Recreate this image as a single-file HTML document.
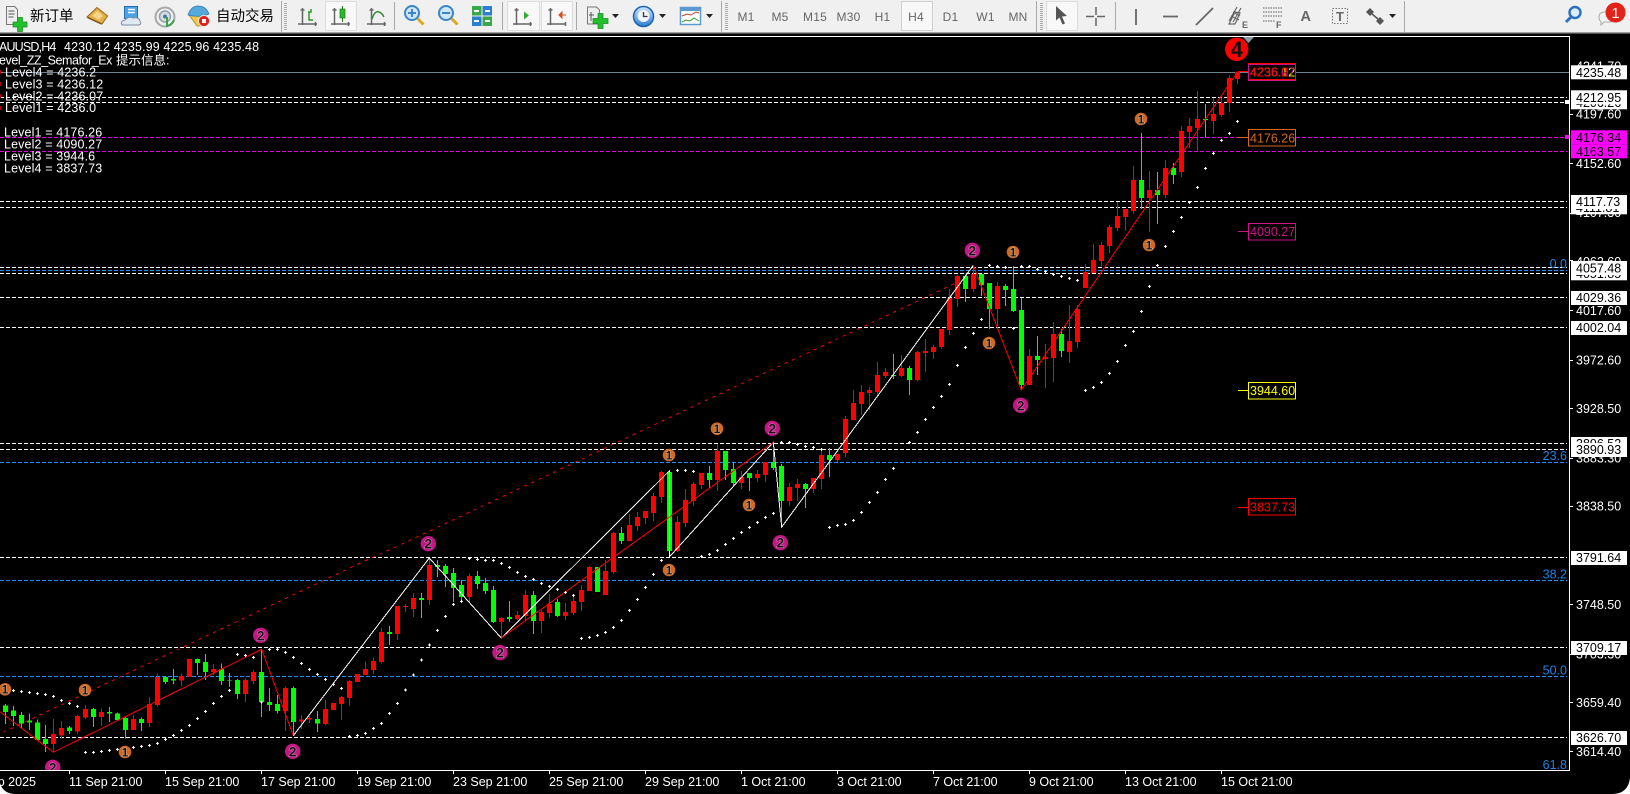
<!DOCTYPE html>
<html><head><meta charset="utf-8"><title>XAUUSD,H4</title>
<style>
html,body{margin:0;padding:0;background:#000;width:1630px;height:794px;overflow:hidden}
svg{display:block;position:absolute;left:0;top:0}
text{font-family:"Liberation Sans","Noto Sans CJK SC",sans-serif;white-space:pre}
.c path{fill:none;shape-rendering:crispEdges}
.rw{stroke:#f00;stroke-width:3}.rb{stroke:#f00;stroke-width:15}
.gw{stroke:#0f0;stroke-width:3}.gb{stroke:#0f0;stroke-width:15}
.dots{fill:none;stroke:none;marker-start:url(#mk);marker-mid:url(#mk);marker-end:url(#mk)}
.l{font-size:12.5px;fill:#fff}
.t{font-size:12.5px;fill:#000}
.tf{font-size:12.5px;fill:#1e82e6;text-anchor:end}
.info{font-size:12.5px;fill:#fff;letter-spacing:.13px}
.tb{font-size:12px;fill:#666;text-anchor:middle;letter-spacing:.2px}
.cn{font-size:14.5px;fill:#000;font-family:"Liberation Sans","Noto Sans CJK SC",sans-serif}
.n{font-size:12px;font-weight:bold;fill:#111;text-anchor:middle;stroke:rgba(255,255,255,.55);stroke-width:.9px;paint-order:stroke}
.n2{font-size:14px;font-weight:bold;fill:#111;text-anchor:middle;stroke:rgba(255,255,255,.55);stroke-width:.9px;paint-order:stroke}
.ax{fill:none;stroke:#666;stroke-width:1.5}
.z{shape-rendering:crispEdges;fill:none}
</style></head><body>
<svg width="1630" height="794" viewBox="0 0 1630 794" xmlns="http://www.w3.org/2000/svg">
<defs>
<clipPath id="ch"><rect x="0" y="37" width="1569" height="733"/></clipPath>
<marker id="mk" markerUnits="userSpaceOnUse" viewBox="0 0 9 9" refX="4.5" refY="4.5" markerWidth="9" markerHeight="9"><path d="M3 0h3v3h3v3h-3v3h-3v-3h-3v-3h3z" fill="#fff"/></marker>
<linearGradient id="gb" x1="0" y1="0" x2="0" y2="1"><stop offset="0" stop-color="#cfe8fb"/><stop offset="1" stop-color="#2a7fd0"/></linearGradient>
</defs>
<rect width="1630" height="794" fill="#000"/>
<!-- toolbar -->
<rect width="1630" height="32" fill="#f0f0f0"/>
<rect y="32" width="1630" height="1.5" fill="#a0a0a0"/>
<!-- new order -->
<path d="M6.5 6.5h8l3 3v15h-11z" fill="#eee" stroke="#777"/>
<path d="M8.5 11h6M8.5 14h6M8.5 17h5" stroke="#888" stroke-width="1.5"/>
<path d="M17.5 17.5h5v4.5h4.5v5h-4.500v4.500h-5v-4.500h-4.500v-5h4.500z" fill="#22c02c" stroke="#198a20" stroke-width=".7"/>
<text class="cn" x="30" y="21">新订单</text>
<!-- book -->
<path d="M97 7.500L87 17L102 24L107.500 16Z" fill="#e6b048" stroke="#94641c"/><path d="M87.500 17.500L101.500 24" stroke="#7a5010" stroke-width="1.500"/><path d="M92 16L97.500 11L103 16L99 19.500Z" fill="#f4d68a"/>
<!-- cloud doc -->
<path d="M124.500 6.500h13v12h-13z" fill="#4ba3e6" stroke="#1f6fb5"/><path d="M128 9.500h7M128 12.500h7" stroke="#fff" stroke-width="1.500"/>
<path d="M122 25q-2-4 3-5q3-4 8-2q6-1 7 3q2 3-1 4z" fill="#dfe9f2" stroke="#7d8fa0"/>
<!-- radio -->
<circle cx="165" cy="17" r="9.500" fill="none" stroke="#a8a8a8" stroke-width="2"/><circle cx="165" cy="16.500" r="5.500" fill="#dcdcdc" stroke="#8aa0b0" stroke-width="1.500"/><circle cx="165" cy="16.500" r="2" fill="#3f7fb0"/><path d="M167 17v9q5-1 7-6" fill="none" stroke="#3aa04a" stroke-width="2"/>
<!-- auto trading -->
<path d="M189 15l8 11h8v-11z" fill="#efc94a" stroke="#a88420" stroke-width=".7"/>
<path d="M188 15q3-9 10-9q8 0 11 8q-10 4-21 1z" fill="#55a8dc" stroke="#2d78b0" stroke-width=".7"/>
<circle cx="204" cy="21" r="5.500" fill="#e02020" stroke="#fff" stroke-width=".7"/><rect x="202" y="19" width="4" height="4" fill="#fff"/>
<text class="cn" x="216" y="21">自动交易</text>
<!-- separators -->
<path d="M281.500 1v31M394.500 2v28M502.500 2v28M576.500 2v28M721.500 1v31M1036.500 1v31M1115.500 2v28M1404.500 1v31" stroke="#a8a8a8" fill="none"/>
<path d="M285.500 3v27M726.500 3v27M1041.500 3v27" stroke="#aaa" stroke-width="3" stroke-dasharray="1 1" fill="none"/>
<!-- selected buttons -->
<rect x="325.500" y="1.500" width="31" height="29" fill="#f8f8f8" stroke="#dcdcdc"/>
<rect x="507.500" y="1.500" width="32" height="29" fill="#f8f8f8" stroke="#dcdcdc"/>
<rect x="541.500" y="1.500" width="31" height="29" fill="#f8f8f8" stroke="#dcdcdc"/>
<rect x="901.500" y="1.500" width="31" height="29" fill="#f8f8f8" stroke="#d0d0d0"/>
<rect x="1046.500" y="1.500" width="31" height="29" fill="#f8f8f8" stroke="#dcdcdc"/>
<!-- chart type icons -->
<path class="ax" d="M302.500 8v17M298 24h19M334.500 8v17M331 24h19M371.500 8v17M367 24h19M516.500 8v17M513 24h19M550.500 8v17M547 24h19M300.500 10h4M332.500 10h4M369.500 10h4M514.500 10h4M548.500 10h4M315.500 22v4M348.500 22v4M384.500 22v4M530.500 22v4M565.500 22v4"/>
<path d="M308 12h3v-3M309 12v8h4" fill="none" stroke="#2a9a2a" stroke-width="1.500"/>
<path d="M342.500 6v16" stroke="#1a7a1a"/><rect x="340" y="9" width="5" height="9" fill="#2ab82a" stroke="#1a7a1a" stroke-width=".7"/>
<path d="M372 19q3-9 7-7q3 1 5 5" fill="none" stroke="#3a8a3a" stroke-width="1.500"/>
<path d="M524 11.500l5 4l-5 4z" fill="#30b030"/>
<path d="M566 15l-4 0M562 12l-3 3l3 3z" stroke="#d05020" fill="#d05020"/>
<!-- zoom -->
<circle cx="412" cy="13" r="7" fill="#cfe6f8" stroke="#3a86c8" stroke-width="2"/><path d="M408 13h8M412 9v8" stroke="#3a86c8" stroke-width="2"/><path d="M417.500 18.500l6 6" stroke="#d8a820" stroke-width="3"/>
<circle cx="446" cy="13" r="7" fill="#cfe6f8" stroke="#3a86c8" stroke-width="2"/><path d="M442 13h8" stroke="#3a86c8" stroke-width="2"/><path d="M451.500 18.500l6 6" stroke="#d8a820" stroke-width="3"/>
<!-- tile -->
<rect x="472" y="6" width="9.500" height="9.500" fill="#3aa84a"/><rect x="482.500" y="6" width="9.500" height="9.500" fill="#2a7fd0"/><rect x="472" y="16.500" width="9.500" height="9.500" fill="#2a7fd0"/><rect x="482.500" y="16.500" width="9.500" height="9.500" fill="#3aa84a"/>
<path d="M474 11h5M485 11h5M474 21h5M485 21h5" stroke="#fff" stroke-width="2"/>
<!-- add indicator -->
<path d="M587.500 7h9l3 3v14h-12z" fill="#eee" stroke="#777"/><path d="M591 12v9M589 15h5" stroke="#555" stroke-width="1"/>
<path d="M597 15.500h5v5h5v5h-5v5h-5v-5h-5v-5h5z" fill="#22c02c" stroke="#198a20" stroke-width=".7" transform="translate(1,-2)"/>
<path d="M612 14h7l-3.500 4zM659 14h7l-3.500 4zM706 14h7l-3.500 4zM1389 14h7l-3.500 4z" fill="#222"/>
<!-- clock -->
<circle cx="643.500" cy="16.500" r="10" fill="url(#gb)" stroke="#1a62b0" stroke-width="1.500"/><circle cx="643.500" cy="16" r="6" fill="#eef4fa"/><path d="M643.500 12v4.500h4" stroke="#334" fill="none" stroke-width="1.300"/>
<!-- template -->
<rect x="680.500" y="7.500" width="20" height="17" fill="#fff" stroke="#5a9ad0" stroke-width="1.500"/><rect x="680" y="7" width="21" height="4" fill="#5a9ad0"/>
<path d="M682 16l5-2l4 1l5-3l3 1" fill="none" stroke="#c04020"/><path d="M682 22l4-2l4 1l4-3l5 3" fill="none" stroke="#30a030"/>
<!-- periods -->
<text class="tb" x="746" y="21">M1</text><text class="tb" x="780" y="21">M5</text><text class="tb" x="815" y="21">M15</text><text class="tb" x="848.500" y="21">M30</text><text class="tb" x="882.500" y="21">H1</text><text class="tb" x="916" y="21">H4</text><text class="tb" x="950.500" y="21">D1</text><text class="tb" x="985.500" y="21">W1</text><text class="tb" x="1018" y="21">MN</text>
<!-- cursor -->
<path d="M1056 6l11 10l-5 0.500l3 7l-2.500 1l-3-7l-3.500 3z" fill="#555"/>
<!-- crosshair -->
<path d="M1096 7v19M1086 16.500h19" stroke="#666" stroke-width="1.500" fill="none" stroke-dasharray="8 3 8"/>
<path d="M1136 9v16M1163 16.500h15M1196 25l17-17" stroke="#666" stroke-width="1.800" fill="none"/>
<path d="M1229 24l6-12l5 1l-5 11zM1231 16l8 4M1233 12l7 4M1241 8l-8 14M1237 7l-8 14" stroke="#666" fill="none" stroke-width="1.200"/>
<text x="1242" y="28" style="font-size:9px;font-weight:bold;fill:#666">E</text>
<path d="M1263 8h19M1263 12h19M1263 16h19M1263 21h12" stroke="#777" stroke-dasharray="1.500 1" stroke-width="1.300" fill="none"/>
<text x="1276" y="28" style="font-size:9px;font-weight:bold;fill:#666">F</text>
<text x="1300.500" y="21" style="font-size:14.500px;font-weight:bold;fill:#666">A</text>
<rect x="1332.500" y="8.500" width="15" height="15" fill="none" stroke="#777" stroke-dasharray="1.500 1.500"/>
<text x="1336" y="21" style="font-size:13px;font-weight:bold;fill:#666">T</text>
<path d="M1366 12l4-4l4 4l-4 4zM1376 21l4-4l4 4l-4 4z" fill="#555"/><path d="M1372 14l6 5" stroke="#555" stroke-width="1.500"/>
<!-- search + balloon -->
<circle cx="1575" cy="12.500" r="5.500" fill="#dcecf8" stroke="#2a70c0" stroke-width="2.400"/><path d="M1571 17l-5 5" stroke="#2a70c0" stroke-width="3"/>
<path d="M1599 17q0-5 6-5h4q6 0 6 5t-6 5h-5l-3 3v-3.500q-2-1-2-4.500z" fill="#f4f4f4" stroke="#aaa"/>
<circle cx="1615.500" cy="12.500" r="10" fill="#e2231a"/><text x="1615.500" y="18" style="font-size:15px;fill:#fff;text-anchor:middle">1</text>

<!-- frame -->
<path d="M0 36.500H1569.500V770.500H0" fill="none" stroke="#fff"/>

<g clip-path="url(#ch)">
<!-- level lines -->
<path d="M0 72.500H1569" stroke="#708090"/>
<path d="M0 97.500H1567M0 102.500H1567M0 201.500H1567M0 207.500H1567M0 267.500H1567M0 273.500H1567M0 297.500H1567M0 327.500H1567M0 443.500H1567M0 449.500H1567M0 557.500H1567M0 647.500H1567M0 737.500H1567" stroke="#fff" stroke-dasharray="4 2" fill="none"/>
<path d="M0 137.500H1567M0 151.500H1567" stroke="#f0f" stroke-dasharray="4 2" fill="none" opacity=".9"/>
<path d="M0 270.500H1567M0 462.500H1567M0 580.500H1567M0 676.500H1567" stroke="#1e90ff" stroke-dasharray="4 2" fill="none"/>

<!-- candles: group 1 -->
<g class="c" transform="translate(0,560) scale(.33333) translate(.5,0)">
<path class="gw" d="M16 432V492M40 438V498M64 456V502M88 460V510M112 478V540M136 495V576M208 498V522M280 444V501M328 441V486M352 458V482M376 470V535M424 472V513M496 350V372M520 327V372M592 295V345M616 282V360M664 310V375M688 339V381M712 357V417M784 270V471M808 384V453M832 405V460M880 380V525M952 453V516M1168 198V255"/>
<path class="gb" d="M16 437V456M40 452V468M64 465V490M88 481V488M112 487V540M136 537V552M208 503V513M280 447V471M328 456V460M352 460V480M376 474V510M424 477V489M496 351V366M520 357V362M592 297V309M616 306V336M664 327V363M688 360V362M712 360V402M784 336V426M808 426V435M832 432V453M880 384V486M952 477V491M1168 216V222"/>
<path class="rw" d="M160 477V576M184 483V535M232 465V522M256 435V477M304 445V498M400 465V510M448 411V501M472 340V440M544 340V378M640 312V345M736 355V426M760 330V372M856 380V513M904 465V507M928 466V489M976 420V495M1024 408V480M1048 360V438M1096 304V345M1120 292V342M1144 204V310M1192 138V240"/>
<path class="rb" d="M160 522V552M184 504V526M232 468V514M256 447V472M304 456V471M400 477V510M448 432V489M472 351V435M544 348V362M568 297V351M640 327V336M736 360V402M760 336V363M856 384V453M904 478V484M928 474V478M976 447V492M1000 429V450M1024 411V432M1048 363V414M1072 342V366M1096 327V345M1120 303V330M1144 216V306M1192 138V222"/>
</g>
<!-- group 2 -->
<g class="c" transform="translate(400,400) scale(.33333) translate(.5,0)">
<path class="gw" d="M64 579V654M112 480V531M136 492V561M160 504V606M184 540V600M232 513V567M256 534V582M280 558V669M328 603V666M400 573V702M472 597V651M592 501V576M664 381V432M808 216V471M928 198V264M976 153V240M1000 186V258M1048 219V273M1120 150V210M1144 192V366"/>
<path class="gb" d="M64 594V600M112 495V501M136 498V522M160 519V564M184 555V591M232 528V552M256 549V573M280 570V666M328 651V657M400 585V663M472 606V648M592 501V576M664 399V423M808 216V453M928 219V240M976 153V210M1000 207V249M1048 219V234M1120 186V204M1144 198V303"/>
<path class="rw" d="M16 612V636M40 579V651M88 474V615M208 520V606M304 651V714M352 633V660M376 570V660M424 630V699M448 582V654M496 609V660M520 585V645M544 555V633M568 498V573M616 480V585M640 396V522M688 342V423M712 336V393M736 333V372M760 279V363M784 213V309M832 348V456M856 267V381M880 246V318M904 219V267M952 132V273M1024 213V267M1072 210V246M1096 186V246M1168 249V318M1192 237V303"/>
<path class="rb" d="M16 618V621M40 594V627M88 495V600M208 528V591M304 654V666M352 645V657M376 585V648M424 636V663M448 612V639M496 636V648M520 603V639M544 570V606M568 501V573M616 513V585M640 399V516M688 375V423M712 351V378M736 333V354M760 288V339M784 216V291M832 366V453M856 300V369M880 252V303M904 219V255M952 153V240M1024 231V249M1072 222V234M1096 186V225M1168 261V303M1192 252V264"/>
</g>
<!-- group 3 (k 100-104) -->
<g class="c" transform="translate(790,400) scale(.33333) translate(.5,0)">
<path class="gw" d="M46 249V324M118 144V231"/>
<path class="gb" d="M46 252V267M118 165V180"/>
<path class="rw" d="M70 234V279M94 150V267M142 162V186"/>
<path class="rb" d="M70 234V267M94 165V237M142 162V180"/>
</g>
<!-- group 4 -->
<g class="c" transform="translate(800,220) scale(.33333) translate(.5,0)">
<path class="gw" d="M280 402V477M328 438V525M496 165V246M544 162V228M568 189V327M616 192V258M640 138V276M664 234V510M712 348V465M784 327V411"/>
<path class="gb" d="M280 465V468M328 444V480M496 168V207M544 162V195M568 189V267M616 198V210M640 207V273M664 270V495M712 408V420M784 342V393"/>
<path class="rw" d="M136 588V711M160 510V600M184 495V585M208 501V570M232 426V528M256 444V474M304 405V471M352 393V483M376 357V456M400 375V417M424 327V387M448 207V345M472 165V261M520 135V216M592 186V318M688 387V495M736 372V504M760 306V486M808 255V429M832 255V384"/>
<path class="rb" d="M136 597V699M160 549V600M184 516V552M208 510V519M232 465V516M256 456V468M304 444V468M352 396V480M376 393V399M400 381V396M424 327V381M448 234V330M472 168V237M520 162V207M592 198V267M688 408V495M736 411V417M760 342V414M808 363V396M832 267V366"/>
</g>
<!-- group 5 -->
<g class="c" transform="translate(1040,40) scale(.33333) translate(.5,0)">
<path class="gw" d="M304 279V507M352 396V552M400 369V432M496 192V292"/>
<path class="gb" d="M304 420V474M352 450V465M400 384V405M496 237V240"/>
<path class="rw" d="M136 672V744M160 612V699M184 606V678M208 555V639M232 486V573M256 507V573M280 378V522M328 393V576M376 360V474M424 258V411M448 234V324M472 153V334M520 174V282M544 174V231M568 105V216M592 96V132"/>
<path class="rb" d="M136 696V744M160 660V699M184 615V663M208 561V618M232 528V564M256 507V531M280 420V513M328 450V474M376 384V465M424 273V396M448 258V276M472 237V264M520 222V243M544 189V225M568 114V189M592 96V117"/>
</g>

<!-- zigzags -->
<polyline class="z" points="0,711.700 53.300,752.300 261.700,649.300 293.300,735.700" stroke="#f00"/>
<polyline class="z" points="293.300,735.700 429.300,558 501.300,638 669.300,471 669.300,557 773.300,442.300 781.700,527 973.300,265.300" stroke="#fff"/>
<polyline class="z" points="501.300,638 773.300,442.300" stroke="#f00"/>
<polyline class="z" points="973.300,265.300 1021.300,390 1237.300,72.300" stroke="#f00"/>
<polyline class="z" points="3.300,732.300 366.700,560 400,545 706.700,400 801.700,355.700 960,281" stroke="#f00" stroke-dasharray="3 5"/>

<!-- SAR dots -->
<g transform="translate(0,560) scale(.33333) translate(.5,0)">
<polyline class="dots" points="16,388 40,392 64,395 88,398 112,401 136,404 160,409 184,421 208,430 232,439"/>
<polyline class="dots" points="256,577 280,577 304,574 328,571 352,568 376,565 400,562 424,559 448,556 472,550 496,538 520,526 544,511 568,496 592,476 616,454 640,430 664,409 688,391"/>
<polyline class="dots" points="712,283 736,286 760,292 784,426 808,268 832,268 856,277 880,292 904,310 928,328 952,343 976,358 1000,373 1024,385"/>
<polyline class="dots" points="1048,529 1072,526 1096,520 1120,505 1144,490 1168,460 1192,430"/>
</g>
<g transform="translate(400,400) scale(.33333) translate(.5,0)">
<polyline class="dots" points="16,870 40,825 64,780 88,735 112,691 136,649 160,613 184,604"/>
<polyline class="dots" points="208,475 232,478 256,481 280,481 304,490 328,502 352,517 376,529 400,538 424,550 448,559 472,568 496,577 520,586"/>
<polyline class="dots" points="544,715 568,712 592,706 616,697 640,682 664,661 688,631 712,598 736,562 760,523 784,481"/>
<polyline class="dots" points="832,211 856,211 880,214"/>
<polyline class="dots" points="904,469 928,463 952,451 976,433 1000,415 1024,397 1048,382 1072,367 1096,352 1120,340"/>
<polyline class="dots" points="1144,127 1168,127 1192,133"/>
</g>
<g transform="translate(790,400) scale(.33333) translate(.5,0)">
<polyline class="dots" points="46,139 70,142 94,148"/>
<polyline class="dots" points="118,382 142,376 166,373 190,361 214,337 238,307 262,277 286,238 310,205"/>
</g>
<g transform="translate(800,220) scale(.33333) translate(.5,0)">
<polyline class="dots" points="328,667 352,637 376,598 400,562 424,529 448,493 472,436 496,382 520,340 544,298"/>
<polyline class="dots" points="568,136 592,139 616,142 640,325 664,139 688,139 712,148 736,154 760,163 784,169 808,175 832,181"/>
<polyline class="dots" points="856,511 880,502 904,487 928,460 952,424 976,376 1000,334 1024,274 1048,199 1072,136 1096,79 1120,34"/>
</g>
<g transform="translate(1040,40) scale(.33333) translate(.5,0)">
<polyline class="dots" points="424,532 448,487 472,442 496,385 520,340 544,301 568,280 592,244"/>
</g>

<!-- semafor markers -->
<g fill="#d2691e">
<circle cx="5" cy="689.300" r="6.300"/><circle cx="85" cy="690" r="6.300"/><circle cx="125" cy="752" r="6.300"/><circle cx="669" cy="455" r="6.300"/><circle cx="717" cy="428.700" r="6.300"/><circle cx="749" cy="505" r="6.300"/><circle cx="669" cy="570" r="6.300"/><circle cx="1013" cy="252" r="6.300"/><circle cx="989" cy="343" r="6.300"/><circle cx="1141" cy="119" r="6.300"/><circle cx="1149" cy="245" r="6.300"/>
</g>
<g fill="#c71585">
<circle cx="52.700" cy="767.300" r="7.700"/><circle cx="260.700" cy="635.300" r="7.700"/><circle cx="292.700" cy="751.300" r="7.700"/><circle cx="428.300" cy="543.700" r="7.700"/><circle cx="500" cy="652.600" r="7.700"/><circle cx="772.300" cy="428.300" r="7.700"/><circle cx="780.300" cy="542.700" r="7.700"/><circle cx="972.300" cy="250.300" r="7.700"/><circle cx="1020.700" cy="405.300" r="7.700"/>
</g>
<text class="n" x="5" y="693.500">1</text><text class="n" x="85" y="694.300">1</text><text class="n" x="125" y="756.300">1</text><text class="n" x="669" y="459.300">1</text><text class="n" x="717" y="433">1</text><text class="n" x="749" y="509.300">1</text><text class="n" x="669" y="574.300">1</text><text class="n" x="1013" y="256.300">1</text><text class="n" x="989" y="347.300">1</text><text class="n" x="1141" y="123.300">1</text><text class="n" x="1149" y="249.300">1</text>
<text class="n2" x="52.700" y="772.300">2</text><text class="n2" x="260.700" y="640.300">2</text><text class="n2" x="292.700" y="756.300">2</text><text class="n2" x="428.300" y="548.700">2</text><text class="n2" x="500" y="657.600">2</text><text class="n2" x="772.300" y="433.300">2</text><text class="n2" x="780.300" y="547.700">2</text><text class="n2" x="972.300" y="255.300">2</text><text class="n2" x="1020.700" y="410.300">2</text>

<circle cx="1236.700" cy="49.300" r="11.700" fill="#f00"/>
<text x="1236.700" y="57" style="font-size:22px;font-weight:bold;fill:#111;text-anchor:middle">4</text>
<path d="M1243 37h11l-5.500 6z" fill="#8a9aa5"/>

<!-- right level tags -->
<path d="M1238 71.500h10" stroke="#f00"/><path d="M1238 137.500h10" stroke="#d2691e"/><path d="M1238 231.500h10" stroke="#c71585"/><path d="M1238 390.500h10" stroke="#ff0"/><path d="M1238 507.500h10" stroke="#f00"/>
<rect x="1248.500" y="63.500" width="47" height="16" fill="#000" stroke="#f00"/>
<rect x="1248.500" y="64.500" width="47" height="16" fill="none" stroke="#c71585"/>
<text x="1250" y="76.500" style="font-size:12.500px;fill:#ff0">4236.12</text>
<text x="1250" y="76.500" style="font-size:12.500px;fill:#d2691e">4236.0</text>
<text x="1250" y="76.500" style="font-size:12.500px;fill:#c71585">4236.07</text>
<text x="1250" y="76.500" style="font-size:12.500px;fill:#f00">4236.2</text>
<rect x="1248.500" y="129.500" width="47" height="16.500" fill="#000" stroke="#d2691e"/>
<text x="1250" y="142.500" style="font-size:12.500px;fill:#d2691e">4176.26</text>
<rect x="1248.500" y="223.500" width="47" height="16.500" fill="#000" stroke="#c71585"/>
<text x="1250" y="236" style="font-size:12.500px;fill:#c71585">4090.27</text>
<rect x="1248.500" y="382.500" width="47" height="16.500" fill="#000" stroke="#ff0"/>
<text x="1250" y="395" style="font-size:12.500px;fill:#ff0">3944.60</text>
<rect x="1248.500" y="498.500" width="47" height="16.500" fill="#000" stroke="#f00"/>
<text x="1250" y="511.500" style="font-size:12.500px;fill:#f00">3837.73</text>

<!-- top-left info -->
<rect x="0" y="70" width="1" height="4" fill="#a00"/><rect x="0" y="82" width="1" height="4" fill="#a00"/><rect x="0" y="94" width="1" height="4" fill="#a00"/><rect x="0" y="106" width="1" height="4" fill="#a00"/>
<text class="info" x="-8.500" y="51" textLength="65" lengthAdjust="spacing">XAUUSD,H4</text>
<text class="info" x="64" y="51">4230.12 4235.99 4225.96 4235.48</text>
<text class="info" x="-7.500" y="64.500" textLength="120" lengthAdjust="spacing">Level_ZZ_Semafor_Ex</text>
<text class="info" x="116" y="64.500" style="letter-spacing:0">提示信息:</text>
<text class="info" x="5" y="76.500">Level4 = 4236.2</text>
<text class="info" x="5" y="88.500">Level3 = 4236.12</text>
<text class="info" x="5" y="100.500">Level2 = 4236.07</text>
<text class="info" x="5" y="112">Level1 = 4236.0</text>
<text class="info" x="4" y="136.500">Level1 = 4176.26</text>
<text class="info" x="4" y="148.500">Level2 = 4090.27</text>
<text class="info" x="4" y="160.500">Level3 = 3944.6</text>
<text class="info" x="4" y="172.500">Level4 = 3837.73</text>

<!-- fib labels -->
<text class="tf" x="1567" y="268">0.0</text><text class="tf" x="1567" y="460">23.6</text><text class="tf" x="1567" y="578.500">38.2</text><text class="tf" x="1567" y="674.500">50.0</text><text class="tf" x="1567" y="769">61.8</text>
</g>

<!-- axis ticks -->
<path d="M1570 114.500h3M1570 163.500h3M1570 213.500h3M1570 260.500h3M1570 310.500h3M1570 360.500h3M1570 408.500h3M1570 458.500h3M1570 506.500h3M1570 604.500h3M1570 654.500h3M1570 702.500h3M1570 751.500h3M69.500 771v3M165.500 771v3M261.500 771v3M357.500 771v3M453.500 771v3M549.500 771v3M645.500 771v3M741.500 771v3M837.500 771v3M933.500 771v3M1029.500 771v3M1125.500 771v3M1221.500 771v3" stroke="#fff" fill="none"/>
<!-- price scale text -->
<text class="l" x="1576" y="70.500">4241.70</text><text class="l" x="1576" y="118.500">4197.60</text><text class="l" x="1576" y="168">4152.60</text><text class="l" x="1576" y="217">4107.30</text><text class="l" x="1576" y="266">4062.60</text><text class="l" x="1576" y="315">4017.60</text><text class="l" x="1576" y="364.500">3972.60</text><text class="l" x="1576" y="413">3928.50</text><text class="l" x="1576" y="462.500">3883.30</text><text class="l" x="1576" y="510.500">3838.50</text><text class="l" x="1576" y="609">3748.50</text><text class="l" x="1576" y="658.500">3703.30</text><text class="l" x="1576" y="707">3659.40</text><text class="l" x="1576" y="756">3614.40</text>
<!-- price boxes -->
<rect x="1571" y="65.300" width="56" height="14" fill="#fff"/><text class="t" x="1576" y="77">4235.48</text>
<rect x="1571" y="95.300" width="56" height="14" fill="#fff"/><text class="t" x="1576" y="107">4206.26</text>
<rect x="1571" y="90.300" width="56" height="14" fill="#fff"/><text class="t" x="1576" y="102">4212.95</text>
<rect x="1571" y="130.300" width="56" height="14" fill="#f0f"/><text class="t" x="1576" y="142">4176.34</text>
<rect x="1571" y="144.300" width="56" height="14" fill="#f0f"/><text class="t" x="1576" y="156">4163.57</text>
<rect x="1571" y="200.300" width="56" height="14" fill="#fff"/><text class="t" x="1576" y="212">4111.81</text>
<rect x="1571" y="195" width="56" height="14" fill="#fff"/><text class="t" x="1576" y="206">4117.73</text>
<rect x="1571" y="266.300" width="56" height="14" fill="#fff"/><text class="t" x="1576" y="278">4051.85</text>
<rect x="1571" y="261" width="56" height="14" fill="#fff"/><text class="t" x="1576" y="272.500">4057.48</text>
<rect x="1571" y="291" width="56" height="14" fill="#fff"/><text class="t" x="1576" y="302">4029.36</text>
<rect x="1571" y="321" width="56" height="14" fill="#fff"/><text class="t" x="1576" y="332">4002.04</text>
<rect x="1571" y="437" width="56" height="14" fill="#fff"/><text class="t" x="1576" y="448">3896.52</text>
<rect x="1571" y="443" width="56" height="14" fill="#fff"/><text class="t" x="1576" y="454">3890.93</text>
<rect x="1571" y="551" width="56" height="14" fill="#fff"/><text class="t" x="1576" y="562">3791.64</text>
<rect x="1571" y="641" width="56" height="14" fill="#fff"/><text class="t" x="1576" y="652">3709.17</text>
<rect x="1571" y="731" width="56" height="14" fill="#fff"/><text class="t" x="1576" y="742">3626.70</text>
<rect x="1565" y="100" width="4" height="4" fill="#fff"/><rect x="1565" y="135" width="4" height="4" fill="#f0f"/>
<!-- time axis -->
<text class="l" x="36" y="786" text-anchor="end">Sep 2025</text>
<text class="l" x="69" y="786">11 Sep 21:00</text><text class="l" x="165" y="786">15 Sep 21:00</text><text class="l" x="261" y="786">17 Sep 21:00</text><text class="l" x="357" y="786">19 Sep 21:00</text><text class="l" x="453" y="786">23 Sep 21:00</text><text class="l" x="549" y="786">25 Sep 21:00</text><text class="l" x="645" y="786">29 Sep 21:00</text><text class="l" x="741" y="786">1 Oct 21:00</text><text class="l" x="837" y="786">3 Oct 21:00</text><text class="l" x="933" y="786">7 Oct 21:00</text><text class="l" x="1029" y="786">9 Oct 21:00</text><text class="l" x="1125" y="786">13 Oct 21:00</text><text class="l" x="1221" y="786">15 Oct 21:00</text>
<!-- window corners -->
<path d="M0 783Q3 794 16 794H0Z" fill="#fff"/>
<path d="M1630 778Q1628 794 1612 794H1630Z" fill="#fff"/>
</svg>
</body></html>
